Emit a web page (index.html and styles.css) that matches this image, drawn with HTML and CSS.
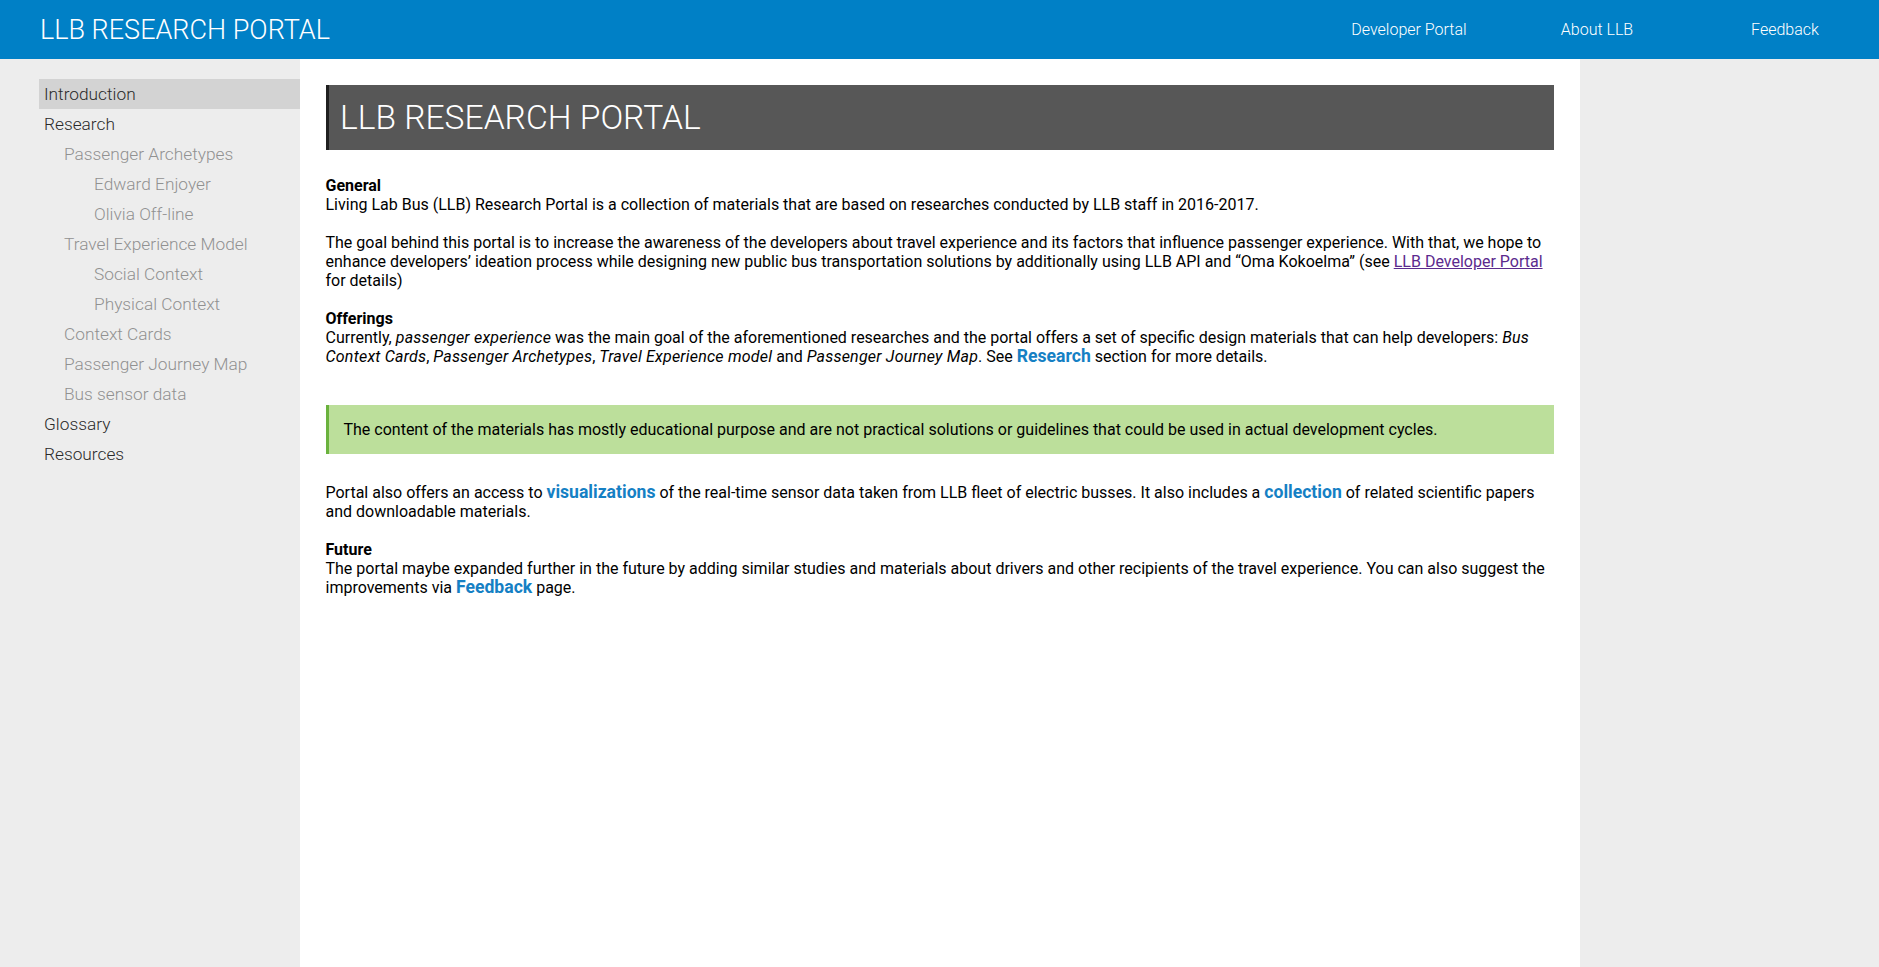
FILE: index.html
```html
<!DOCTYPE html>
<html lang="en">
<head>
<meta charset="utf-8">
<title>LLB Research Portal</title>
<link rel="stylesheet" href="styles.css">
</head>
<body>
<header class="topbar">
  <div class="brand">LLB RESEARCH PORTAL</div>
  <nav class="topnav">
    <a class="topnav-item" href="#">Developer Portal</a>
    <a class="topnav-item" href="#">About LLB</a>
    <a class="topnav-item" href="#">Feedback</a>
  </nav>
</header>
<div class="layout">
  <aside class="sidebar">
    <ul class="menu">
      <li class="menu-item lvl0 active">Introduction</li>
      <li class="menu-item lvl0">Research</li>
      <li class="menu-item lvl1">Passenger Archetypes</li>
      <li class="menu-item lvl2">Edward Enjoyer</li>
      <li class="menu-item lvl2">Olivia Off-line</li>
      <li class="menu-item lvl1">Travel Experience Model</li>
      <li class="menu-item lvl2">Social Context</li>
      <li class="menu-item lvl2">Physical Context</li>
      <li class="menu-item lvl1">Context Cards</li>
      <li class="menu-item lvl1">Passenger Journey Map</li>
      <li class="menu-item lvl1">Bus sensor data</li>
      <li class="menu-item lvl0">Glossary</li>
      <li class="menu-item lvl0">Resources</li>
    </ul>
  </aside>
  <main class="content">
    <h1 class="page-title">LLB RESEARCH PORTAL</h1>
    <p class="para"><strong>General</strong><br>Living Lab Bus (LLB) Research Portal is a collection of materials that are based on researches conducted by LLB staff in 2016-2017.</p>
    <p class="para">The goal behind this portal is to increase the awareness of the developers about travel experience and its factors that influence passenger experience. With that, we hope to enhance developers’ ideation process while designing new public bus transportation solutions by additionally using LLB API and “Oma Kokoelma” (see <a class="visited" href="#">LLB Developer Portal</a> for details)</p>
    <p class="para"><strong>Offerings</strong><br>Currently, <em>passenger experience</em> was the main goal of the aforementioned researches and the portal offers a set of specific design materials that can help developers: <em>Bus Context Cards</em>, <em>Passenger Archetypes</em>, <em>Travel Experience model</em> and <em>Passenger Journey Map</em>. See <a class="hl" href="#">Research</a> section for more details.</p>
    <div class="note">The content of the materials has mostly educational purpose and are not practical solutions or guidelines that could be used in actual development cycles.</div>
    <p class="para">Portal also offers an access to <a class="hl" href="#">visualizations</a> of the real-time sensor data taken from LLB fleet of electric busses. It also includes a <a class="hl" href="#">collection</a> of related scientific papers and downloadable materials.</p>
    <p class="para"><strong>Future</strong><br>The portal maybe expanded further in the future by adding similar studies and materials about drivers and other recipients of the travel experience. You can also suggest the improvements via <a class="hl" href="#">Feedback</a> page.</p>
  </main>
  <div class="rightpad"></div>
</div>
</body>
</html>
```

FILE: styles.css
```css
html, body {
  margin: 0;
  padding: 0;
}
body {
  background: #ededed;
  font-family: Roboto, "Liberation Sans", sans-serif;
  color: #000;
  min-height: 967px;
}
.topbar {
  height: 59px;
  background: #0080c6;
  display: flex;
  align-items: center;
  justify-content: space-between;
  color: #fff;
}
.brand {
  font-weight: 300;
  font-size: 27px;
  padding-left: 40px;
  line-height: 59px;
  padding-top: 1px;
}
.topnav {
  display: flex;
}
.topnav-item {
  width: 188px;
  text-align: center;
  color: #fff;
  text-decoration: none;
  font-weight: 300;
  font-size: 16px;
  line-height: 59px;
}
.layout {
  display: grid;
  grid-template-columns: 1fr 1280px 1fr;
  min-height: 908px;
}
.sidebar {
  padding: 20px 0 0 39px;
}
.menu {
  list-style: none;
  margin: 0;
  padding: 0;
}
.menu-item {
  height: 30px;
  line-height: 31px;
  font-size: 17.3px;
  font-weight: 300;
  color: #333;
}
.menu-item.active {
  background: #d3d3d3;
}
.lvl0 { padding-left: 5px; color: #2a2a2a; }
.lvl1 { padding-left: 25px; color: #919191; }
.lvl2 { padding-left: 55px; color: #919191; }
.content {
  background: #fff;
  padding: 26px 26px 40px;
  font-size: 16px;
  line-height: 19px;
}
.page-title {
  margin: 0 0 26px;
  background: #575757;
  border-left: 3px solid #1f1f1f;
  color: #fff;
  font-weight: 300;
  font-size: 33.6px;
  line-height: 39px;
  padding: 13px 12px 13px 11.5px;
}
.para {
  margin: 0 0 19px;
}
.para strong {
  font-weight: 700;
}
.para em {
  letter-spacing: 0.21px;
}
.hl {
  color: #1580c4;
  font-weight: 700;
  font-size: 17.6px;
  line-height: 19px;
  text-decoration: none;
}
.visited {
  color: #5b2a8e;
  text-decoration: underline;
}
.note {
  margin: 39px 0 29px;
  background: #bcdf9b;
  border-left: 3px solid #6ab23d;
  padding: 15px;
}
```
